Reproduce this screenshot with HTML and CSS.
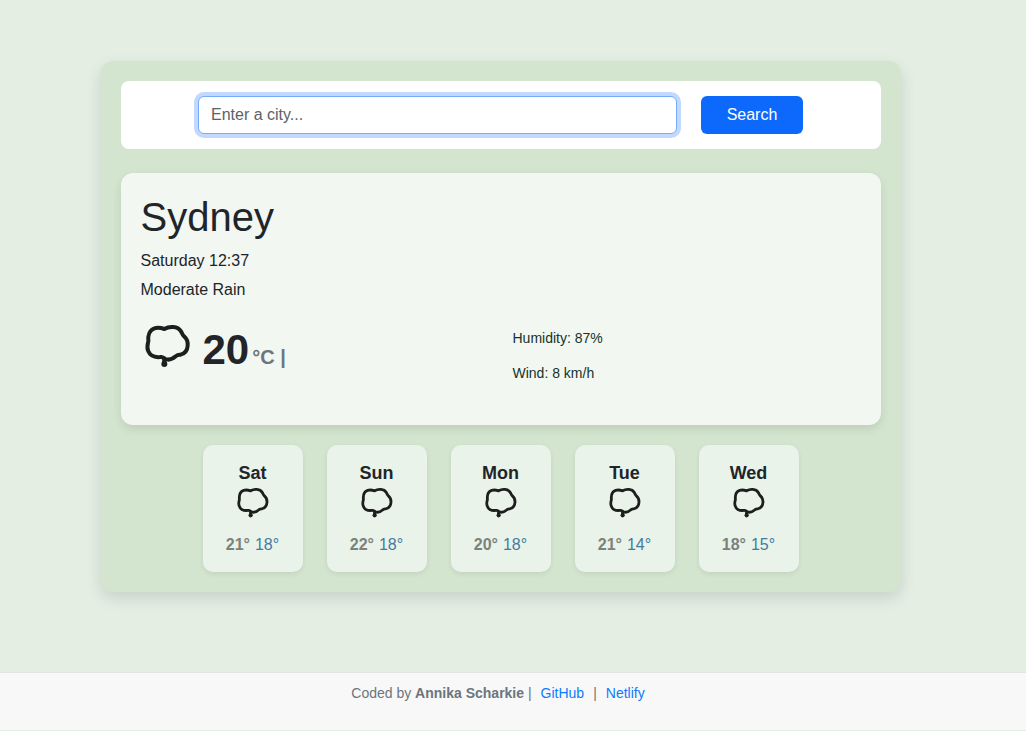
FILE: index.html
```html
<!DOCTYPE html>
<html lang="en">
<head>
<meta charset="utf-8">
<title>Weather</title>
<link rel="stylesheet" href="styles.css">
</head>
<body>
<svg class="defs" aria-hidden="true">
  <symbol id="cloud" viewBox="0 0 192 180">
    <path d="M88 42C103 33 128 33 138 49C141 54 142 59 147 64C154 70 159 80 158 92C157 108 149 116 137 119C131 120 127 119 122 124C113 132 101 136 91 132C86 129 83 124 76 126C58 128 46 123 40 109C34 98 38 89 40 79C38 61 44 45 58 40C69 37 79 39 88 42Z" fill="none" stroke="#1c1f1e" stroke-width="12" stroke-linejoin="round"/>
    <path d="M88 130V146" stroke="#1c1f1e" stroke-width="13"/>
    <circle cx="88" cy="147" r="9" fill="#1c1f1e"/>
  </symbol>
</svg>
<main class="app">
  <form class="search">
    <input class="search-input" type="text" placeholder="Enter a city...">
    <button class="search-button" type="button">Search</button>
  </form>
  <section class="current">
    <h1 class="city">Sydney</h1>
    <p class="line">Saturday 12:37</p>
    <p class="line">Moderate Rain</p>
    <div class="readings">
      <div class="temperature">
        <svg class="icon"><use href="#cloud"/></svg>
        <strong class="degrees">20</strong>
        <span class="unit">°C |</span>
      </div>
      <div class="details">
        <p>Humidity: 87%</p>
        <p>Wind: 8 km/h</p>
      </div>
    </div>
  </section>
  <section class="forecast">
    <div class="day"><h2>Sat</h2><svg class="day-icon"><use href="#cloud"/></svg><p><b>21°</b> <span>18°</span></p></div>
    <div class="day"><h2>Sun</h2><svg class="day-icon"><use href="#cloud"/></svg><p><b>22°</b> <span>18°</span></p></div>
    <div class="day"><h2>Mon</h2><svg class="day-icon"><use href="#cloud"/></svg><p><b>20°</b> <span>18°</span></p></div>
    <div class="day"><h2>Tue</h2><svg class="day-icon"><use href="#cloud"/></svg><p><b>21°</b> <span>14°</span></p></div>
    <div class="day"><h2>Wed</h2><svg class="day-icon"><use href="#cloud"/></svg><p><b>18°</b> <span>15°</span></p></div>
  </section>
</main>
<footer class="footer">Coded by <strong>Annika Scharkie</strong> |<a href="#">GitHub</a>|<a href="#">Netlify</a></footer>
</body>
</html>
```

FILE: styles.css
```css
* { box-sizing: border-box; }
body {
  margin: 0;
  height: 731px;
  overflow: hidden;
  padding-top: 61px;
  background: #e4eee3;
  color: #212529;
  font: 16px/24px "Liberation Sans", Arial, sans-serif;
}
h1, h2, p { margin: 0; }
.defs { display: none; }
.app {
  width: 800px;
  height: 531px;
  margin-left: 101px;
  padding: 20px;
  border-radius: 12px;
  background: #d3e5cf;
  box-shadow: 0 6px 16px rgba(0, 0, 0, .12);
}
.search {
  display: flex;
  justify-content: center;
  gap: 24px;
  height: 68px;
  padding: 15px 1px 15px 0;
  border-radius: 8px;
  background: #fff;
}
.search-input {
  width: 479px;
  height: 38px;
  padding: 6px 12px;
  border: 1px solid #74acfb;
  border-radius: 6px;
  outline: 0;
  background: #fff;
  box-shadow: 0 0 0 4px #c2d8fe;
  color: #212529;
  font: inherit;
}
.search-input::placeholder { color: #5e6265; opacity: 1; }
.search-button {
  width: 102px;
  height: 38px;
  padding: 0;
  border: 0;
  border-radius: 6px;
  background: #0d69fc;
  color: #fff;
  font: inherit;
}
.current {
  height: 252px;
  margin-top: 24px;
  padding: 20px 20px 20px 19.5px;
  border-radius: 12px;
  background: #f2f7f1;
  box-shadow: 0 4px 10px rgba(0, 0, 0, .1);
}
.city { margin-bottom: 8px; font-size: 40px; font-weight: 400; line-height: 48px; }
.line { margin-bottom: 5px; }
.readings { display: grid; grid-template-columns: 372px 1fr; margin-top: 13px; }
.temperature { display: flex; align-items: baseline; height: 64px; }
.icon { width: 64px; height: 60px; margin: 0 4px 0 -6px; align-self: flex-start; }
.degrees { font-size: 42px; line-height: 70px; }
.unit { margin-left: 3px; color: #6c757d; font-size: 20px; font-weight: 700; }
.details { padding-top: 13px; color: #14342b; font-size: 14px; line-height: 21px; }
.details p { margin-bottom: 14px; }
.forecast { display: flex; justify-content: center; gap: 24px; margin-top: 20px; }
.day {
  display: flex;
  flex-direction: column;
  align-items: center;
  width: 100px;
  height: 127px;
  padding: 17px 1px 0 0;
  border-radius: 10px;
  background: #e9f3ea;
  box-shadow: 0 2px 5px rgba(0, 0, 0, .08);
}
.day h2 { font-size: 18px; line-height: 22px; }
.day-icon { width: 45px; height: 42px; margin: -3px 0 0; }
.day p { margin-top: 10px; }
.day b { color: #7c827b; }
.day span { margin-left: 0.5px; color: #447aa0; }
.footer {
  height: 59px;
  margin-top: 80px;
  padding: 10px 21px 0 0;
  border-top: 1px solid #e3e5e5;
  border-bottom: 1px solid #e3eee3;
  background: #f8f8f8;
  color: #6c757d;
  font-size: 14px;
  line-height: 21px;
  text-align: center;
}
.footer a { margin: 0 9px; color: #0d7bff; text-decoration: none; }
```
